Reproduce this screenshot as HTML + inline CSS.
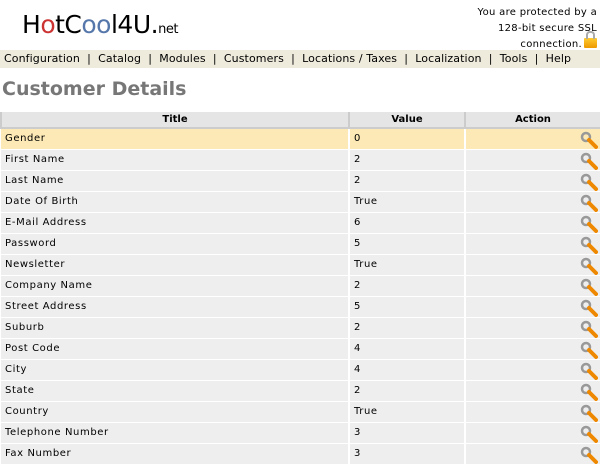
<!DOCTYPE html>
<html><head><style>
body{margin:0;width:600px;height:466px;overflow:hidden;background:#fff;font-family:"DejaVu Sans","Liberation Sans",sans-serif;font-size:10px;color:#000}
.logo{position:absolute;left:22px;top:10px;font-family:"DejaVu Sans",sans-serif;font-size:25px;letter-spacing:-0.5px}
.logo small{font-size:13px}
.ssl{position:absolute;right:3px;top:5px;text-align:right;font-size:10px;line-height:16px;letter-spacing:0.3px}
.lock{display:inline-block;width:13px;height:10px;background:linear-gradient(#fc3,#e90);border-radius:1px;position:relative;top:1px;margin-left:2px}
.lock:before{content:"";position:absolute;left:2px;top:-7px;width:5px;height:6px;border:2px solid #aaa;border-bottom:none;border-radius:4px 4px 0 0}
.nav{position:absolute;left:0;top:50px;width:600px;height:18px;background:#eeebdd;font-size:11px;line-height:18px;padding-left:4px;box-sizing:border-box;white-space:nowrap;letter-spacing:0.1px}
h1{position:absolute;left:2px;top:78px;margin:0;font-size:19px;color:#777;font-family:"DejaVu Sans",sans-serif;font-weight:bold}
table{position:absolute;left:0;top:112px;width:600px;border-collapse:collapse;table-layout:fixed}
th{background:#e5e5e5;height:15px;font-size:10px;border-bottom:2px solid #ccc;border-left:2px solid #ccc;padding:0;line-height:15px}
tr.r{height:21px}
td{height:20px;line-height:20px;border-bottom:1px solid #fff;background:#eee;padding:0 0 0 4px;font-size:10px;overflow:hidden;box-sizing:border-box;letter-spacing:0.6px}
td+td{border-left:2px solid #fff}
tr.h td{background:#fce9b5}
td.a{padding:0 2px 0 0}
td.a svg{display:block;float:right;margin-top:1px}
</style></head><body>
<div class="logo">H<span style="color:#c33">o</span>tC<span style="color:#57a">oo</span>l4U.<small>net</small></div>
<div class="ssl">You are protected by a<br>128-bit secure SSL<br>connection.<span class="lock"></span></div>
<div class="nav">Configuration &nbsp;|&nbsp; Catalog &nbsp;|&nbsp; Modules &nbsp;|&nbsp; Customers &nbsp;|&nbsp; Locations / Taxes &nbsp;|&nbsp; Localization &nbsp;|&nbsp; Tools &nbsp;|&nbsp; Help</div>
<h1>Customer Details</h1>
<table>
<colgroup><col style="width:348px"><col style="width:116px"><col></colgroup>
<tr><th>Title</th><th>Value</th><th>Action</th></tr>
<tr class="r h"><td>Gender</td><td>0</td><td class="a"><svg width="18" height="18"><circle cx="6" cy="6" r="4" fill="none" stroke="#999" stroke-width="2.5"/><line x1="9" y1="9" x2="16" y2="16" stroke="#e80" stroke-width="4" stroke-linecap="round"/></svg></td></tr>
<tr class="r"><td>First Name</td><td>2</td><td class="a"><svg width="18" height="18"><circle cx="6" cy="6" r="4" fill="none" stroke="#999" stroke-width="2.5"/><line x1="9" y1="9" x2="16" y2="16" stroke="#e80" stroke-width="4" stroke-linecap="round"/></svg></td></tr>
<tr class="r"><td>Last Name</td><td>2</td><td class="a"><svg width="18" height="18"><circle cx="6" cy="6" r="4" fill="none" stroke="#999" stroke-width="2.5"/><line x1="9" y1="9" x2="16" y2="16" stroke="#e80" stroke-width="4" stroke-linecap="round"/></svg></td></tr>
<tr class="r"><td>Date Of Birth</td><td>True</td><td class="a"><svg width="18" height="18"><circle cx="6" cy="6" r="4" fill="none" stroke="#999" stroke-width="2.5"/><line x1="9" y1="9" x2="16" y2="16" stroke="#e80" stroke-width="4" stroke-linecap="round"/></svg></td></tr>
<tr class="r"><td>E-Mail Address</td><td>6</td><td class="a"><svg width="18" height="18"><circle cx="6" cy="6" r="4" fill="none" stroke="#999" stroke-width="2.5"/><line x1="9" y1="9" x2="16" y2="16" stroke="#e80" stroke-width="4" stroke-linecap="round"/></svg></td></tr>
<tr class="r"><td>Password</td><td>5</td><td class="a"><svg width="18" height="18"><circle cx="6" cy="6" r="4" fill="none" stroke="#999" stroke-width="2.5"/><line x1="9" y1="9" x2="16" y2="16" stroke="#e80" stroke-width="4" stroke-linecap="round"/></svg></td></tr>
<tr class="r"><td>Newsletter</td><td>True</td><td class="a"><svg width="18" height="18"><circle cx="6" cy="6" r="4" fill="none" stroke="#999" stroke-width="2.5"/><line x1="9" y1="9" x2="16" y2="16" stroke="#e80" stroke-width="4" stroke-linecap="round"/></svg></td></tr>
<tr class="r"><td>Company Name</td><td>2</td><td class="a"><svg width="18" height="18"><circle cx="6" cy="6" r="4" fill="none" stroke="#999" stroke-width="2.5"/><line x1="9" y1="9" x2="16" y2="16" stroke="#e80" stroke-width="4" stroke-linecap="round"/></svg></td></tr>
<tr class="r"><td>Street Address</td><td>5</td><td class="a"><svg width="18" height="18"><circle cx="6" cy="6" r="4" fill="none" stroke="#999" stroke-width="2.5"/><line x1="9" y1="9" x2="16" y2="16" stroke="#e80" stroke-width="4" stroke-linecap="round"/></svg></td></tr>
<tr class="r"><td>Suburb</td><td>2</td><td class="a"><svg width="18" height="18"><circle cx="6" cy="6" r="4" fill="none" stroke="#999" stroke-width="2.5"/><line x1="9" y1="9" x2="16" y2="16" stroke="#e80" stroke-width="4" stroke-linecap="round"/></svg></td></tr>
<tr class="r"><td>Post Code</td><td>4</td><td class="a"><svg width="18" height="18"><circle cx="6" cy="6" r="4" fill="none" stroke="#999" stroke-width="2.5"/><line x1="9" y1="9" x2="16" y2="16" stroke="#e80" stroke-width="4" stroke-linecap="round"/></svg></td></tr>
<tr class="r"><td>City</td><td>4</td><td class="a"><svg width="18" height="18"><circle cx="6" cy="6" r="4" fill="none" stroke="#999" stroke-width="2.5"/><line x1="9" y1="9" x2="16" y2="16" stroke="#e80" stroke-width="4" stroke-linecap="round"/></svg></td></tr>
<tr class="r"><td>State</td><td>2</td><td class="a"><svg width="18" height="18"><circle cx="6" cy="6" r="4" fill="none" stroke="#999" stroke-width="2.5"/><line x1="9" y1="9" x2="16" y2="16" stroke="#e80" stroke-width="4" stroke-linecap="round"/></svg></td></tr>
<tr class="r"><td>Country</td><td>True</td><td class="a"><svg width="18" height="18"><circle cx="6" cy="6" r="4" fill="none" stroke="#999" stroke-width="2.5"/><line x1="9" y1="9" x2="16" y2="16" stroke="#e80" stroke-width="4" stroke-linecap="round"/></svg></td></tr>
<tr class="r"><td>Telephone Number</td><td>3</td><td class="a"><svg width="18" height="18"><circle cx="6" cy="6" r="4" fill="none" stroke="#999" stroke-width="2.5"/><line x1="9" y1="9" x2="16" y2="16" stroke="#e80" stroke-width="4" stroke-linecap="round"/></svg></td></tr>
<tr class="r"><td>Fax Number</td><td>3</td><td class="a"><svg width="18" height="18"><circle cx="6" cy="6" r="4" fill="none" stroke="#999" stroke-width="2.5"/><line x1="9" y1="9" x2="16" y2="16" stroke="#e80" stroke-width="4" stroke-linecap="round"/></svg></td></tr>
</table>
</body></html>
